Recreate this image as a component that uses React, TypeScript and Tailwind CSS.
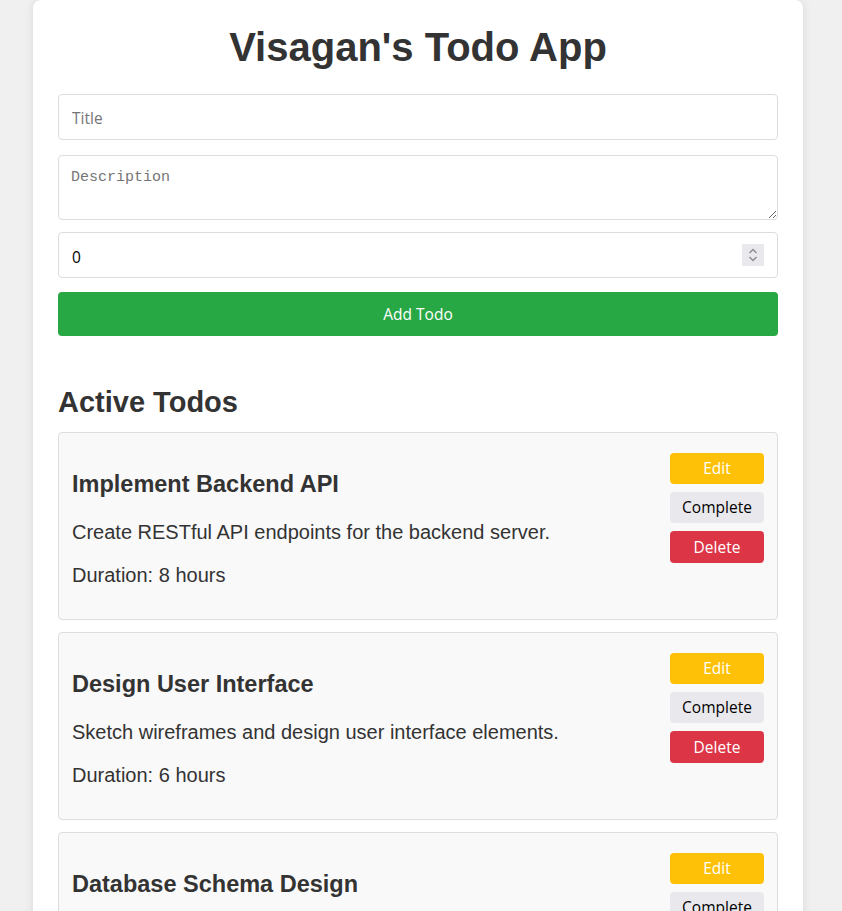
import React, { useState } from 'react';

type Todo = {
  id: number;
  title: string;
  description: string;
  duration: number;
};

const initialTodos: Todo[] = [
  { id: 1, title: 'Implement Backend API', description: 'Create RESTful API endpoints for the backend server.', duration: 8 },
  { id: 2, title: 'Design User Interface', description: 'Sketch wireframes and design user interface elements.', duration: 6 },
  { id: 3, title: 'Database Schema Design', description: 'Design the database tables and relationships.', duration: 5 },
];

const uiFont = "font-['Open_Sans','Noto_Sans',sans-serif]";

const TodoCard: React.FC<{ todo: Todo }> = ({ todo }) => (
  <div className="mb-[12px] flex items-start justify-between rounded border border-[#ddd] bg-[#f9f9f9] px-[13px] pt-[15px] pb-[12px]">
    <div>
      <h3 className="mt-[23px] mb-[24px] text-[23.5px] font-bold leading-[26px]">{todo.title}</h3>
      <p className="mb-[20px] text-[20px] leading-[23px]">{todo.description}</p>
      <p className="mb-[20px] text-[20px] leading-[23px]">Duration: {todo.duration} hours</p>
    </div>
    <div className={`flex w-[94px] flex-col gap-2 pt-[5px] text-[15.5px] ${uiFont}`}>
      <button className="h-[31px] rounded bg-[#ffc107] pt-[1px] text-white">Edit</button>
      <button className="h-[31px] rounded bg-[#e9e9ed] pt-[1px] text-black">Complete</button>
      <button className="h-[32px] rounded bg-[#dc3545] pt-[1px] text-white">Delete</button>
    </div>
  </div>
);

export default function App() {
  const [todos] = useState<Todo[]>(initialTodos);
  const [duration, setDuration] = useState('0');

  return (
    <div className="min-h-screen bg-[#f0f0f0] font-['Liberation_Sans',Arial,sans-serif] text-[#333]">
      <div className="ml-[33px] w-[770px] rounded-lg bg-white px-[25px] pt-[24px] pb-6 shadow-[0_0_10px_rgba(0,0,0,0.1)]">
        <h1 className="mb-[24px] text-center text-[40px] font-bold leading-[46px]">Visagan's Todo App</h1>

        <input
          type="text"
          placeholder="Title"
          className={`mb-[15px] block h-[46px] w-full rounded border border-[#ddd] px-[13px] pt-[2px] text-[15.5px] outline-none placeholder:text-[#757575] ${uiFont}`}
        />
        <textarea
          placeholder="Description"
          className="mb-[12px] block h-[65px] w-full rounded border border-[#ddd] px-[12px] pt-[13px] font-['Liberation_Mono',monospace] text-[15px] leading-[18px] outline-none placeholder:text-[#757575]"
        />
        <div className="relative mb-[14px]">
          <input
            type="text"
            value={duration}
            onChange={(e) => setDuration(e.target.value)}
            className={`block h-[46px] w-full rounded border border-[#ddd] px-[13px] pt-[3px] text-[15.5px] text-black outline-none ${uiFont}`}
          />
          {/* spinner */}
          <div className="absolute top-[12px] right-[14px] flex h-[22px] w-[22px] flex-col items-center justify-center gap-[2px] bg-[#e9e9ed]">
            <svg width="10" height="6" viewBox="0 0 10 6" fill="none" stroke="#8b8b95" strokeWidth="1.4">
              <path d="M1.5 5L5 1.5L8.5 5" />
            </svg>
            <svg width="10" height="6" viewBox="0 0 10 6" fill="none" stroke="#8b8b95" strokeWidth="1.4">
              <path d="M1.5 1L5 4.5L8.5 1" />
            </svg>
          </div>
        </div>
        <button className={`block h-[44px] w-full rounded bg-[#28a745] pt-[2px] text-[15.5px] text-white ${uiFont}`}>Add Todo</button>

        <h2 className="mt-[50px] mb-[13px] text-[29px] font-bold leading-[33px]">Active Todos</h2>
        {todos.map((todo) => (
          <TodoCard key={todo.id} todo={todo} />
        ))}
      </div>
    </div>
  );
}
